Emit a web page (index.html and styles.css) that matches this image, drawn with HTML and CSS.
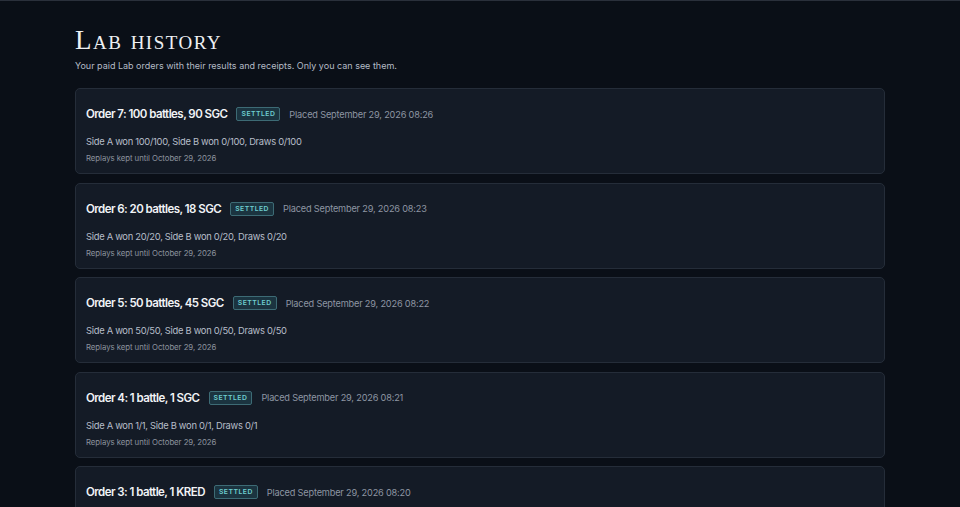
FILE: index.html
```html
<!DOCTYPE html>
<html lang="en">
<head>
<meta charset="utf-8">
<title>Lab history</title>
<link rel="stylesheet" href="styles.css">
</head>
<body>
<main class="page">
  <header class="page-head">
    <h1 class="page-title">Lab history</h1>
    <p class="page-sub">Your paid Lab orders with their results and receipts. Only you can see them.</p>
  </header>
  <section class="orders">
    <article class="order">
      <div class="order-head">
        <h2 class="order-title">Order 7: 100 battles, 90 SGC</h2>
        <span class="badge">SETTLED</span>
        <span class="placed">Placed September 29, 2026 08:26</span>
      </div>
      <p class="result">Side A won 100/100, Side B won 0/100, Draws 0/100</p>
      <p class="keep">Replays kept until October 29, 2026</p>
    </article>
    <article class="order">
      <div class="order-head">
        <h2 class="order-title">Order 6: 20 battles, 18 SGC</h2>
        <span class="badge">SETTLED</span>
        <span class="placed">Placed September 29, 2026 08:23</span>
      </div>
      <p class="result">Side A won 20/20, Side B won 0/20, Draws 0/20</p>
      <p class="keep">Replays kept until October 29, 2026</p>
    </article>
    <article class="order">
      <div class="order-head">
        <h2 class="order-title">Order 5: 50 battles, 45 SGC</h2>
        <span class="badge">SETTLED</span>
        <span class="placed">Placed September 29, 2026 08:22</span>
      </div>
      <p class="result">Side A won 50/50, Side B won 0/50, Draws 0/50</p>
      <p class="keep">Replays kept until October 29, 2026</p>
    </article>
    <article class="order">
      <div class="order-head">
        <h2 class="order-title">Order 4: 1 battle, 1 SGC</h2>
        <span class="badge">SETTLED</span>
        <span class="placed">Placed September 29, 2026 08:21</span>
      </div>
      <p class="result">Side A won 1/1, Side B won 0/1, Draws 0/1</p>
      <p class="keep">Replays kept until October 29, 2026</p>
    </article>
    <article class="order">
      <div class="order-head">
        <h2 class="order-title">Order 3: 1 battle, 1 KRED</h2>
        <span class="badge">SETTLED</span>
        <span class="placed">Placed September 29, 2026 08:20</span>
      </div>
      <p class="result">Side A won 1/1, Side B won 0/1, Draws 0/1</p>
      <p class="keep">Replays kept until October 29, 2026</p>
    </article>
  </section>
</main>
</body>
</html>
```
FILE: styles.css
```css
html, body {
  margin: 0;
  padding: 0;
  background: #0a0f17;
  height: 100%;
  overflow: hidden;
}
body {
  border-top: 1px solid #2a303b;
  font-family: Inter, "Noto Sans", sans-serif;
  color: #e6e9ee;
}
.page {
  width: 810px;
  margin: 0 auto;
  padding-top: 25px;
}
.page-head {
  margin-bottom: 16px;
}
.page-title {
  margin: 0;
  font-family: "Liberation Serif", "DejaVu Serif", serif;
  font-variant: small-caps;
  font-weight: normal;
  font-size: 27px;
  line-height: 28px;
  letter-spacing: 1.5px;
  color: #eef0f3;
}
.page-sub {
  margin: 6px 0 0;
  font-size: 9px;
  line-height: 12px;
  color: #b4bbc6;
}
.orders {
  display: flex;
  flex-direction: column;
  gap: 8.6px;
}
.order {
  background: #141b26;
  border: 1px solid #252d39;
  border-radius: 5px;
  padding: 12px 10px 10px;
  height: 86px;
  box-sizing: border-box;
}
.order-head {
  display: flex;
  align-items: center;
  height: 26px;
}
.order-title {
  margin: 0 9px 0 0;
  font-size: 11.5px;
  font-weight: 600;
  color: #f1f3f6;
  letter-spacing: -0.55px;
}
.badge {
  font-size: 6.8px;
  font-weight: 600;
  letter-spacing: 0.5px;
  color: #6fcfd0;
  background: #1b3440;
  border: 1px solid #3d6b75;
  border-radius: 2px;
  padding: 2px 4px;
  line-height: 8px;
  margin-right: 9px;
}
.placed {
  font-size: 9.2px;
  letter-spacing: -0.18px;
  color: #8e96a3;
}
.result {
  margin: 8px 0 0;
  font-size: 9.4px;
  letter-spacing: -0.3px;
  line-height: 14px;
  color: #b7bec9;
}
.keep {
  margin: 3px 0 0;
  font-size: 7.8px;
  letter-spacing: -0.05px;
  line-height: 12px;
  color: #8c939e;
}
```
